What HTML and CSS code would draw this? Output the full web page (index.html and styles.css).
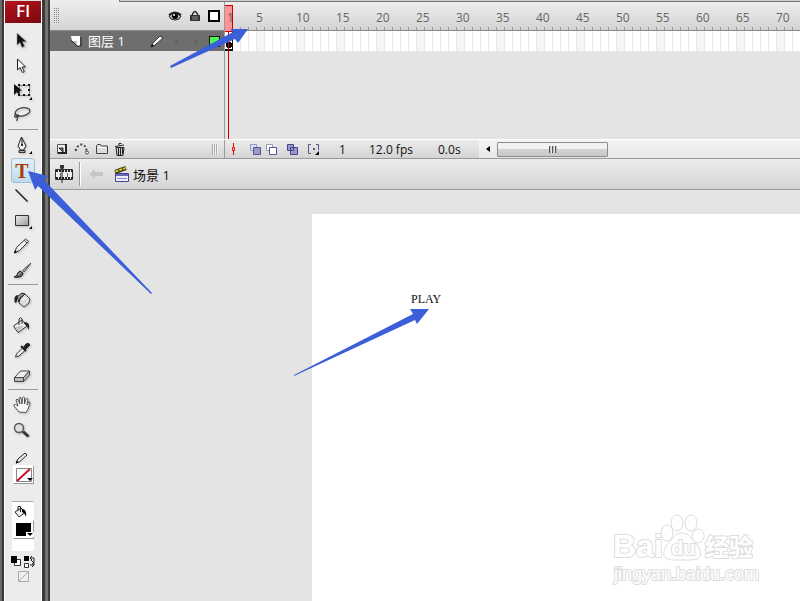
FILE: index.html
```
<!DOCTYPE html>
<html lang="zh-CN">
<head>
    <meta charset="UTF-8">
    <meta name="viewport" content="width=device-width, initial-scale=1.0">
    <title>Flash</title>
    <link rel="stylesheet" href="styles.css">
</head>
<body>

<div class="app">
    <aside class="toolbox">
        <div class="logo">Fl</div>

        <div class="tools">
            <button class="tool" aria-label="Selection">
                <svg viewBox="0 0 24 25"><path d="M6 5v12l3-2.500 2 5 2.500-1.200-2-4.500h4z" fill="#111" stroke="#999" stroke-width=".5"/></svg>
            </button>
            <button class="tool" aria-label="Subselection">
                <svg viewBox="0 0 24 25"><path d="M6.500 6v11l2.500-2.500 2.500 5 1.800-1-2.300-4.500h3.500z" fill="#fff" stroke="#222"/></svg>
            </button>
            <button class="tool" aria-label="Free transform">
                <svg viewBox="0 0 24 25"><path d="M8.500 7.500h10v10h-10z" fill="none" stroke="#222" stroke-dasharray="1 1"/><path d="M7 6h2v2H7zM12 6h2v2h-2zM17 6h2v2h-2zM17 11h2v2h-2zM7 16h2v2H7zM12 16h2v2h-2zM17 16h2v2h-2zM3 6v11l3-3 1 2 2-1-1-2 3-.500z" fill="#111"/><path d="M21 19v3h-3z"/></svg>
            </button>
            <button class="tool" aria-label="Lasso">
                <svg viewBox="0 0 24 25"><ellipse cx="11.500" cy="9" rx="7.500" ry="4" fill="none" stroke="#444" stroke-width="1.300" transform="rotate(-12 11 9)"/><path d="M5 11c-2 1-2 4 1 3s2-3-1-1M6 14c2 2-1 2 0 4" fill="none" stroke="#333" stroke-width="1.200"/></svg>
            </button>
        </div>

        <div class="tools">
            <button class="tool" aria-label="Pen">
                <svg viewBox="0 0 24 25"><path d="M10.500 4l-3.500 9 2.500 4h3l2.500-4z" fill="#eee" stroke="#222"/><path d="M11 5v7" stroke="#222"/><circle cx="11" cy="12" r="1"/><path d="M8 17.500h6v2H8z" fill="#aaa" stroke="#333"/><path d="M21 18v3h-3z"/></svg>
            </button>
            <button class="tool tool-active" aria-label="Text"><span class="tool-letter">T</span></button>
            <button class="tool" aria-label="Line">
                <svg viewBox="0 0 24 25"><path d="M4.500 6.500l12 12" stroke="#111" stroke-width="1.300"/></svg>
            </button>
            <button class="tool" aria-label="Rectangle">
                <svg viewBox="0 0 24 25"><defs><linearGradient id="rect" x2="1" y2="1"><stop stop-color="#eee"/><stop offset="1" stop-color="#999"/></linearGradient></defs><path d="M4.500 7.500h13v10h-13z" fill="url(#rect)" stroke="#333"/><path d="M21 18v3h-3z"/></svg>
            </button>
            <button class="tool" aria-label="Pencil">
                <svg viewBox="0 0 24 25"><path d="M3.500 20l2-5.500 9-8.500 3 2.500-9 9z" fill="#eee" stroke="#333"/><path d="M13 7l3 3" stroke="#444"/><path d="M3 20.500l1-3.500 2 2z"/></svg>
            </button>
            <button class="tool" aria-label="Brush">
                <svg viewBox="0 0 24 25"><path d="M20 5l-8.500 7.500 1.500 1.500z" fill="#ccc" stroke="#444"/><path d="M3 19c4-1 3-5 6-6l3 2c0 4-5 5-9 4z" fill="#555" stroke="#222"/><path d="M7 17l3-2.500" stroke="#ddd"/></svg>
            </button>
        </div>

        <div class="tools">
            <button class="tool" aria-label="Ink bottle">
                <svg viewBox="0 0 24 25"><path d="M9 11l5-5 5 5-1 4-5 4-5-4z" fill="#ddd" stroke="#444"/><path d="M6 9l5-4 3 1-5 4-1 4z" fill="#999" stroke="#222"/><path d="M7 7c-4 0-4 5-3 8l2-1V9z" fill="#222"/><path d="M11 12l5-2" stroke="#fff"/></svg>
            </button>
            <button class="tool" aria-label="Paint bucket">
                <svg viewBox="0 0 24 25"><path d="M2.500 13L11 7l5 6-9 6.500z" fill="#eee" stroke="#333"/><path d="M8 12V6q1.500-3 3 0v5" fill="none" stroke="#333"/><path d="M13 9c5 0 6 3 4.500 8-1-3-2-5-4-6z" fill="#222"/><path d="M5 14l8-1-6 5z" fill="#bbb"/></svg>
            </button>
            <button class="tool" aria-label="Eyedropper">
                <svg viewBox="0 0 24 25"><path d="M4.500 19l1-3 6-6 2.500 2.500-6 5.500z" fill="#eee" stroke="#333"/><path d="M10 8l5 5" stroke="#222" stroke-width="2"/><path d="M12 10l3-4q3-2 4 1l-5 5z" fill="#222" stroke="#222"/></svg>
            </button>
            <button class="tool" aria-label="Eraser">
                <svg viewBox="0 0 24 25"><path d="M3.500 14.500l6-6.500h9l-6 6.500z" fill="#eee" stroke="#444"/><path d="M3.500 14.500h9v4h-9zM12.500 14.500l6-6.500v4l-6 6.500z" fill="#bbb" stroke="#444"/></svg>
            </button>
        </div>

        <div class="tools">
            <button class="tool" aria-label="Hand">
                <svg viewBox="0 0 24 25"><path d="M8 19l-5-6q-.500-2 1.500-1.500L7 13 5 7q1-2 2 0l2 4-1-6q1-1.500 2 0l1 6 .500-6.500q1.500-1.500 2 0V11l1.500-5q1.500-1.500 2 .500L16 12l1.500-3q1.500-.500 1.500 1L17 16l-2 3.500z" fill="#f6f6f6" stroke="#555"/></svg>
            </button>
            <button class="tool" aria-label="Zoom">
                <svg viewBox="0 0 24 25"><circle cx="8" cy="10" r="4.500" fill="#ddd" stroke="#555" stroke-width="1.400"/><path d="M12 13.500l5.500 5" stroke="#333" stroke-width="3"/></svg>
            </button>
        </div>

        <div class="colors">
            <svg class="color-icon" viewBox="0 0 24 16"><path d="M5 14l2-4 7-6 2 2-7 6.500z" fill="#eee" stroke="#222"/><path d="M5 14.500l.500-3 2 2z"/></svg>
            <button class="swatch" aria-label="Stroke color">
                <svg viewBox="0 0 20 18"><path d="M2.500 2.500h15v13h-15z" fill="#fff" stroke="#888"/><path d="M3 15L16 3" stroke="#c8102e" stroke-width="2"/><path d="M13 12h6l-3 3z"/></svg>
            </button>
            <div class="fill">
                <svg class="color-icon" viewBox="0 0 24 16"><path d="M4 8l6-4 4 4.500-6 4.500z" fill="#eee" stroke="#222"/><path d="M7 7V2.500h2.500V8" fill="none" stroke="#222"/><path d="M11 5q5 0 4 8-1-4-4-5z"/></svg>
                <button class="swatch" aria-label="Fill color">
                    <svg viewBox="0 0 20 18"><path d="M2 2h15v9h-3v4H2z"/><path d="M12 11h8v5h-8z" fill="#fff"/><path d="M13 12h6l-3 3z"/></svg>
                </button>
            </div>
            <button class="color-option" aria-label="Black and white, swap colors">
                <svg viewBox="0 0 26 14"><path d="M4.500 4.500h6v6h-6z" fill="#fff" stroke="#333"/><path d="M1 1h6v7H1z"/><path d="M14 1h5v5h-5z"/><path d="M14.500 8.500h4v4h-4z" fill="#fff" stroke="#333"/><path d="M20 3h4M22 1l-2 2 2 2M24 3v7h-4M22 8l2 2-2 2M21 5l3 3" fill="none" stroke="#222"/></svg>
            </button>
            <button class="color-option" aria-label="No color">
                <svg viewBox="0 0 26 14"><path d="M8.500 2.500h10v10h-10zM9 12l9-9" fill="#eee" stroke="#aaa"/></svg>
            </button>
        </div>
    </aside>

    <main class="main">
        <div class="tab-strip"><span class="tab"></span></div>

        <section class="timeline">
            <div class="layers">
                <div class="layers-head">
                    <span class="dots"></span>
                    <button class="icon-btn" aria-label="Show or hide layers">
                        <svg width="14" height="12" viewBox="0 0 14 12"><path d="M1 6q5-5 12 0-1 4-6 4T1 6z" fill="#bbb" stroke="#222"/><circle cx="7" cy="6" r="3"/><circle cx="6" cy="5" r="1" fill="#fff"/><path d="M1 5q6-5 12 0" fill="none" stroke="#222" stroke-width="2"/></svg>
                    </button>
                    <button class="icon-btn" aria-label="Lock layers">
                        <svg width="12" height="12" viewBox="0 0 12 12"><path d="M3.500 6V4q2.500-5 5 0v2" fill="none" stroke="#222" stroke-width="1.500"/><path d="M1 5h10v6H1z" fill="#333"/><path d="M3 7h6M3 9h6" stroke="#888"/></svg>
                    </button>
                    <button class="icon-btn" aria-label="Show layers as outlines">
                        <svg width="12" height="12" viewBox="0 0 12 12"><path d="M1 1h10v10H1z" fill="#fff" stroke="#000" stroke-width="2"/></svg>
                    </button>
                </div>
                <div class="layer">
                    <svg width="12" height="12" viewBox="0 0 12 12"><path d="M1 1h9v10H7V6H2z" fill="#fff"/><path d="M2 6h5v5z" fill="#bbb"/><path d="M1 6h1l5 5h4V2" fill="none" stroke="#222"/></svg>
                    <span class="layer-name">图层 1</span>
                    <svg width="14" height="14" viewBox="0 0 14 14"><path d="M1 13l2-4 7-7 3 2-8 7z" fill="#fff" stroke="#333"/><path d="M1 13l1-3 2 2z"/></svg>
                    <span class="layer-dot"></span>
                    <span class="layer-dot"></span>
                    <span class="layer-color"></span>
                </div>
            </div>

            <div class="frames">
                <div class="ruler">
                    <span class="first">1</span><span>5</span><span>10</span><span>15</span><span>20</span><span>25</span><span>30</span><span>35</span><span>40</span><span>45</span><span>50</span><span>55</span><span>60</span><span>65</span><span>70</span>
                </div>
                <div class="frame-row"><span class="keyframe"></span></div>
                <div class="playhead"></div>
            </div>
        </section>

        <div class="status-bar">
            <div class="layer-actions">
                <button class="icon-btn" aria-label="Insert layer">
                    <svg width="12" height="12" viewBox="0 0 12 12"><path d="M1.500 1.500h9v9h-9z" fill="#eee" stroke="#555"/><path d="M3 5h4v4z" fill="#777" stroke="#222"/><path d="M10 1v9H2" fill="none" stroke="#222" stroke-width="2"/></svg>
                </button>
                <button class="icon-btn" aria-label="Add motion guide">
                    <svg width="16" height="12" viewBox="0 0 16 12"><path d="M1.500 8q2-6 6-6.500 4 0 5 6" fill="none" stroke="#444" stroke-width="2" stroke-dasharray="2 2"/><circle cx="13" cy="9.500" r="1.500" fill="#fff" stroke="#444"/></svg>
                </button>
                <button class="icon-btn" aria-label="Insert layer folder">
                    <svg width="12" height="12" viewBox="0 0 12 12"><path d="M.500 10.500v-8l1-1h3l1 1.500h6v7.500z" fill="#ddd" stroke="#444"/><path d="M2 4.500h8" stroke="#fff"/></svg>
                </button>
                <button class="icon-btn" aria-label="Delete layer">
                    <svg width="12" height="13" viewBox="0 0 12 13"><path d="M2 4.500h8l-1 8H3z" fill="#ccc" stroke="#222"/><path d="M1 3.500l9-1.500M5 2V.500h2.500M4.500 5v7M6.500 5v7M8.500 5v6" fill="none" stroke="#222"/></svg>
                </button>
                <span class="grip"></span>
            </div>
            <div class="frame-actions">
                <button class="icon-btn" aria-label="Center frame">
                    <svg width="6" height="12" viewBox="0 0 6 12"><path d="M3.500 0v4M3.500 8v4M2.500 4.500h2v3h-2z" fill="none" stroke="#f00"/></svg>
                </button>
                <button class="icon-btn onion" aria-label="Onion skin">
                    <svg width="11" height="11" viewBox="0 0 11 11"><path d="M.500.500h6v6h-6z" fill="#ddf" stroke="#99b"/><path d="M3.500 3.500h7v7h-7z" fill="#99c" stroke="#559"/></svg>
                </button>
                <button class="icon-btn" aria-label="Onion skin outlines">
                    <svg width="11" height="11" viewBox="0 0 11 11"><path d="M.500.500h6v6h-6z" fill="#fff" stroke="#99b"/><path d="M3.500 3.500h7v7h-7z" fill="#fff" stroke="#559"/></svg>
                </button>
                <button class="icon-btn multiple" aria-label="Edit multiple frames">
                    <svg width="11" height="11" viewBox="0 0 11 11"><path d="M.500.500h6v6h-6zM3.500 3.500h7v7h-7z" fill="#99c" stroke="#448"/></svg>
                </button>
                <button class="icon-btn" aria-label="Modify onion markers">
                    <svg width="11" height="11" viewBox="0 0 11 11"><path d="M3 .500H.500v9H3M8 .500h2.500V6" fill="none" stroke="#558"/><path d="M5 4h2v2H5z" fill="#558"/><path d="M11 7v4H7z"/></svg>
                </button>
                <span class="current-frame">1</span>
                <span class="frame-rate">12.0 fps</span>
                <span class="elapsed">0.0s</span>
            </div>
            <div class="scrollbar">
                <button class="scroll-arrow" aria-label="Scroll left"><svg width="4" height="6" viewBox="0 0 4 6"><path d="M4 0v6L0 3z"/></svg></button>
                <button class="scroll-thumb" aria-label="Scroll timeline"><span class="thumb-grip"></span></button>
            </div>
        </div>

        <nav class="edit-bar">
            <button class="icon-btn" aria-label="Toggle timeline">
                <svg width="18" height="18" viewBox="0 0 18 18"><path d="M.500 4.500h17v10H.500z" fill="#eee" stroke="#333"/><path d="M1 6h17M1 13h17" stroke="#222" stroke-width="2" stroke-dasharray="2 1"/><path d="M5.500 8v4M12.500 8v4" stroke="#666"/><path d="M5 0h4v3L7 5 5 3z" fill="#333"/><path d="M7 4v14" stroke="#222"/></svg>
            </button>
            <span class="divider"></span>
            <button class="icon-btn" aria-label="Back" disabled>
                <svg width="14" height="12" viewBox="0 0 14 12"><path d="M0 6l6-5v3h8v4H6v3z" fill="#c5c5c5"/></svg>
            </button>
            <a class="scene" href="#">
                <svg width="16" height="17" viewBox="0 0 16 17"><path d="M1.500 7.500h13v8h-13z" fill="#eef" stroke="#448"/><path d="M2 9h12" stroke="#66b" stroke-width="2"/><path d="M3 12.500h10" stroke="#88c"/><path d="M1 6l11-4" stroke="#332" stroke-width="4"/><path d="M1.500 5.500l10-3.500" stroke="#dc2" stroke-width="2" stroke-dasharray="3 1"/></svg>
                <span>场景 1</span>
            </a>
        </nav>

        <div class="workspace">
            <div class="stage">
                <span class="stage-text">PLAY</span>
            </div>
        </div>
    </main>
</div>

<svg class="arrows" width="450" height="400" viewBox="0 0 450 400">
    <path d="M170 66l63-34-3-3h18l-10 14-3-4-64 29z"/>
    <path d="M28 171l20 5-4 4 108 113-1 1L38 186l-3 4z"/>
    <path d="M294 375l119-61-3-5h19l-12 15-2-4-121 56z"/>
</svg>

<svg class="watermark" width="150" height="76" viewBox="0 0 150 76">
    <text class="wm-logo" x="3" y="48">Bai</text>
    <ellipse cx="57" cy="24" rx="6" ry="8"/>
    <ellipse cx="67" cy="14" rx="6" ry="8"/>
    <ellipse cx="81" cy="14" rx="6" ry="8"/>
    <ellipse cx="88" cy="27" rx="6" ry="7"/>
    <path d="M72 24q6 0 9 5l7 8q8 13-6 14H62q-13-1-6-14l7-8q3-5 9-5z"/>
    <text class="wm-du" x="61" y="46">du</text>
    <text class="wm-cn" x="95" y="47">经验</text>
    <text class="wm-url" x="4" y="71">jingyan.baidu.com</text>
</svg>

</body>
</html>
```
FILE: styles.css
```
* {
    box-sizing: border-box;
}

body {
    margin: 0;
    font-family: "Open Sans", "Noto Sans CJK SC", sans-serif;
    font-size: 12px;
    color: #111;
    background: #e4e4e4;
    overflow: hidden;
}

button {
    padding: 0;
    border: 0;
    background: none;
    font: inherit;
}

svg {
    display: block;
}

.app {
    display: flex;
    min-height: 100vh;
}

/* Toolbox */
.toolbox {
    flex: none;
    width: 50px;
    padding: 0 9px 0 5px;
    background: linear-gradient(to right, #6d6966 0 2px, #3c3a39 2px 4px, #fafafa 4px 5px, #ececec 5px 41px, #fff 41px 42px, #3a3a3a 42px 45px, #777370 45px 48px, #3f3d3c 48px 50px);
}

.logo {
    height: 23px;
    margin-bottom: 5px;
    border-top: 1px solid #ddd;
    background: linear-gradient(160deg, #b5121b, #7a0810);
    color: #fff;
    font-size: 17px;
    font-weight: 600;
    line-height: 20px;
    text-align: center;
}

.tools {
    display: flex;
    flex-direction: column;
    align-items: center;
}

.tools + .tools::before {
    content: "";
    width: 30px;
    height: 1px;
    margin: 1px 0 3px;
    background: #999;
}

.tool {
    width: 24px;
    height: 25px;
}

.tool svg {
    width: 24px;
    height: 25px;
    filter: drop-shadow(1px 1px 1px rgba(0, 0, 0, 0.2));
}

.tool-active {
    border: 1px solid #a3bfd3;
    border-radius: 3px;
    background: linear-gradient(#e4f1fa, #bcdaec);
}

.tool-letter {
    display: block;
    padding-right: 2px;
    color: #a8400c;
    font-family: "Liberation Serif", serif;
    font-size: 20px;
    font-weight: bold;
    line-height: 22px;
}

.colors {
    display: flex;
    flex-direction: column;
    align-items: center;
    padding-top: 6px;
}

.color-icon {
    width: 24px;
    height: 16px;
}

.swatch {
    width: 21px;
    height: 19px;
    border: 1px solid #999;
    border-top-color: #fff;
    border-left-color: #fff;
    background: #fff;
}

.swatch svg {
    width: 20px;
    height: 18px;
}

.fill {
    display: flex;
    flex-direction: column;
    align-items: center;
    width: 22px;
    height: 50px;
    margin: 17px 0 4px;
    padding-top: 2px;
    border-top: 1px solid #aaa;
    border-radius: 0 2px 2px 0;
    background: #fff;
}

.color-option svg {
    width: 26px;
    height: 14px;
}

/* Timeline */
.main {
    flex: 1;
    min-width: 0;
    display: flex;
    flex-direction: column;
}

.tab-strip {
    height: 2px;
    background: linear-gradient(#ccc 50%, #777 50%);
}

.tab {
    display: block;
    width: 70px;
    height: 2px;
    border-right: 1px solid #777;
    background: #ececec;
}

.timeline {
    display: flex;
    height: 138px;
    border-bottom: 1px solid #fff;
}

.layers {
    flex: none;
    width: 175px;
    border-right: 1px solid #999;
}

.layers-head {
    display: flex;
    align-items: center;
    gap: 7px;
    height: 29px;
    padding: 0 4px;
    border-bottom: 1px solid #888;
    background: linear-gradient(#ededed, #d4d4d4);
}

.dots {
    width: 5px;
    height: 16px;
    margin-right: auto;
    background: repeating-linear-gradient(to right, transparent 0 1px, #e4e4e4 1px 2px), repeating-linear-gradient(#888 0 1px, transparent 1px 2px);
}

.layer {
    display: flex;
    align-items: center;
    height: 20px;
    padding: 0 4px 0 20px;
    background: #6e6e6e;
    color: #fff;
}

.layer-name {
    flex: 1;
    padding-left: 6px;
    font-size: 13px;
    line-height: 20px;
}

.layer-dot {
    width: 3px;
    height: 3px;
    margin-left: 11px;
    border-radius: 50%;
    background: #5c5c5c;
}

.layer-dot + .layer-dot {
    margin-left: 16px;
}

.layer-color {
    width: 11px;
    height: 11px;
    margin-left: 12px;
    border: 1px solid #111;
    background: #4dfa4d;
}

.frames {
    position: relative;
    flex: 1;
    overflow: hidden;
}

.ruler {
    display: flex;
    height: 29px;
    border-bottom: 1px solid #888;
    background: repeating-linear-gradient(to right, transparent 0 7px, #999 7px 8px) bottom / 100% 3px no-repeat, linear-gradient(#ededed, #d4d4d4);
    color: #666;
    line-height: 31px;
}

.ruler span {
    flex: none;
    width: 40px;
}

.ruler .first {
    position: relative;
    z-index: 1;
    width: 31px;
    padding-left: 2px;
}

.frame-row {
    height: 20px;
    background: repeating-linear-gradient(to right, transparent 0 7px, #e9e9e9 7px 8px), repeating-linear-gradient(to right, #fff 0 32px, #f5f5f5 32px 40px);
}

.keyframe {
    display: block;
    width: 8px;
    height: 20px;
    border: 1px solid #111;
    border-width: 0 1px 2px 0;
    background: radial-gradient(circle at 4px 14px, #000 0 3px, transparent 3px);
}

.playhead {
    position: absolute;
    top: 3px;
    bottom: 0;
    left: -1px;
    width: 9px;
    background: linear-gradient(#c00, #c00) 4px 0 / 1px 100% no-repeat;
}

.playhead::before {
    content: "";
    display: block;
    height: 25px;
    border: 1px solid #c00;
    background: #ff9494;
}

/* Status bar under the layers */
.status-bar {
    display: flex;
    height: 19px;
    border-bottom: 1px solid #999;
    background: linear-gradient(#ececec, #d4d4d4);
}

.layer-actions {
    flex: none;
    display: flex;
    align-items: center;
    gap: 6px;
    width: 175px;
    padding: 0 6px;
    border-right: 1px solid #999;
}

.grip {
    width: 6px;
    height: 11px;
    margin-left: auto;
    background: repeating-linear-gradient(to right, #aaa 0 1px, #f4f4f4 1px 2px);
}

.frame-actions {
    flex: none;
    display: flex;
    align-items: center;
    width: 254px;
    padding-left: 5px;
}

.frame-actions .icon-btn {
    margin-right: 10px;
}

.frame-actions .onion {
    margin: 0 5px 0 4px;
}

.current-frame {
    width: 30px;
    margin-left: 10px;
}

.frame-rate {
    width: 69px;
}

.scrollbar {
    flex: 1;
    display: flex;
    align-items: center;
    background: linear-gradient(#f4f4f4, #e8e8e8);
}

.scroll-arrow {
    display: grid;
    place-items: center;
    width: 18px;
    height: 16px;
}

.scroll-thumb {
    display: grid;
    place-items: center;
    width: 111px;
    height: 15px;
    border: 1px solid #8c8c8c;
    border-radius: 1px;
    background: linear-gradient(#f2f2f2 50%, #d2d2d2 50%, #c8c8c8);
}

.thumb-grip {
    width: 8px;
    height: 7px;
    background: repeating-linear-gradient(to right, #555 0 1px, #bbb 1px 2px, #eee 2px 3px);
}

/* Scene bar */
.edit-bar {
    display: flex;
    align-items: center;
    height: 31px;
    padding-left: 5px;
    border-bottom: 1px solid #999;
    background: linear-gradient(#ececec, #d4d4d4);
}

.divider {
    width: 2px;
    height: 24px;
    margin: 0 8px 0 6px;
    border-left: 1px solid #999;
    background: #fff;
}

.scene {
    display: flex;
    align-items: center;
    gap: 3px;
    margin-left: 11px;
    color: #111;
    font-size: 13px;
    text-decoration: none;
}

/* Stage */
.workspace {
    flex: 1;
    display: flex;
    padding: 24px 0 0 262px;
}

.stage {
    flex: 1;
    padding: 76px 99px;
    background: #fff;
}

.stage-text {
    font-family: "Liberation Serif", serif;
    font-size: 12px;
    line-height: 18px;
}

/* Pointers and watermark over the page */
.arrows {
    position: absolute;
    top: 0;
    left: 0;
    fill: #3a5fd9;
    pointer-events: none;
}

.watermark {
    position: absolute;
    right: 40px;
    bottom: 16px;
    overflow: visible;
    fill: #fff;
    stroke: #ddd;
    stroke-width: 1;
    pointer-events: none;
}

.watermark text {
    paint-order: stroke;
    stroke-width: 2;
}

.wm-logo {
    font-family: "Liberation Sans", sans-serif;
    font-size: 32px;
    font-weight: bold;
}

.wm-du {
    font-family: "Liberation Sans", sans-serif;
    font-size: 20px;
    font-weight: bold;
}

.wm-cn {
    font-family: "Noto Sans CJK SC", sans-serif;
    font-size: 24px;
    font-weight: bold;
}

.wm-url {
    font-family: "Liberation Sans", sans-serif;
    font-size: 18px;
}
```
